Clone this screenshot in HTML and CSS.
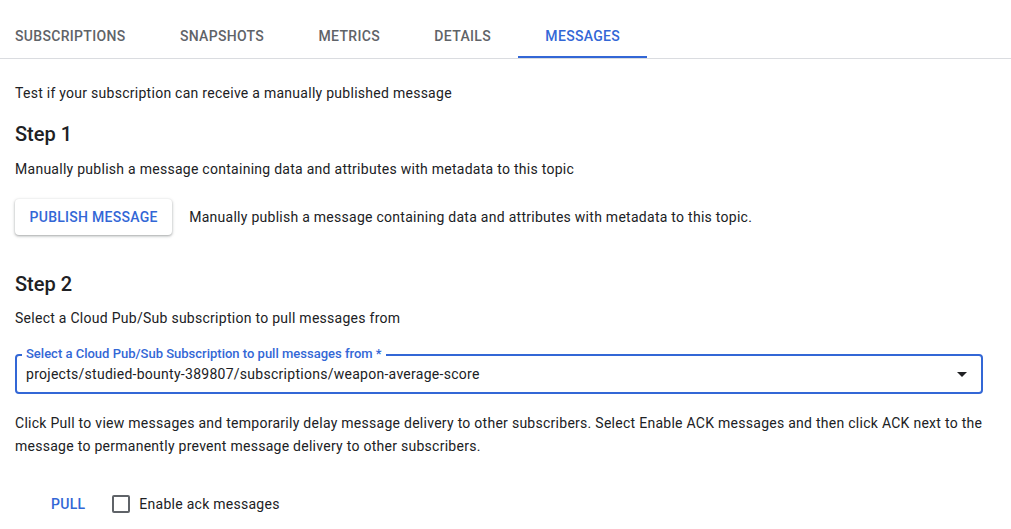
FILE: index.html
```html
<!DOCTYPE html>
<html>
<head>
<meta charset="utf-8">
<link rel="stylesheet" href="styles.css">
</head>
<body>
<nav class="tabs">
  <div class="tab first">SUBSCRIPTIONS</div>
  <div class="tab">SNAPSHOTS</div>
  <div class="tab">METRICS</div>
  <div class="tab">DETAILS</div>
  <div class="tab active">MESSAGES</div>
</nav>
<main class="content">
  <p class="intro">Test if your subscription can receive a manually published message</p>
  <h2 class="step step1">Step 1</h2>
  <p class="desc">Manually publish a message containing data and attributes with metadata to this topic</p>
  <div class="publish-row">
    <button class="raised-btn">PUBLISH MESSAGE</button>
    <span class="publish-text">Manually publish a message containing data and attributes with metadata to this topic.</span>
  </div>
  <h2 class="step step2">Step 2</h2>
  <p class="desc">Select a Cloud Pub/Sub subscription to pull messages from</p>
  <div class="field">
    <span class="field-label">Select a Cloud Pub/Sub Subscription to pull messages from *</span>
    <span class="field-value">projects/studied-bounty-389807/subscriptions/weapon-average-score</span>
    <svg class="arrow" width="24" height="24" viewBox="0 0 24 24"><path d="M7 10l5 5 5-5z" fill="#202124"/></svg>
  </div>
  <p class="help">Click Pull to view messages and temporarily delay message delivery to other subscribers. Select Enable ACK messages and then click ACK next to the message to permanently prevent message delivery to other subscribers.</p>
  <div class="pull-row">
    <button class="text-btn">PULL</button>
    <label class="check"><span class="box"></span><span class="check-label">Enable ack messages</span></label>
  </div>
</main>
</body>
</html>
```
FILE: styles.css
```css
* { box-sizing: border-box; }
html, body { margin: 0; padding: 0; background: #fff; }
body {
  font-family: Roboto, "Liberation Sans", Arial, sans-serif;
  font-size: 14px;
  letter-spacing: 0.27px;
  color: #202124;
  line-height: 20px;
  width: 1011px;
  height: 529px;
  overflow: hidden;
}
.tabs {
  display: flex;
  padding-top: 14px;
  border-bottom: 1px solid #dadce0;
}
.tab {
  height: 44px;
  line-height: 44px;
  padding: 0 27.2px;
  font-weight: 500;
  font-size: 14px;
  letter-spacing: 0.32px;
  color: #5f6368;
  border-bottom: 2px solid transparent;
}
.tab.first { padding-left: 15px; }
.tab.active { color: #3367d6; border-bottom-color: #3367d6; }
.content { padding: 0 28px 0 15px; }
p { margin: 0; }
.intro { margin-top: 24px; }
.step {
  margin: 0;
  font-size: 20px;
  font-weight: 500;
  line-height: 28px;
  letter-spacing: 0;
  color: #202124;
}
.step1 { margin-top: 17px; }
.step2 { margin-top: 35px; }
.desc { margin-top: 11px; }
.step2 + .desc { margin-top: 10px; }
.publish-row {
  display: flex;
  align-items: center;
  margin-top: 20px;
}
.raised-btn {
  height: 36px;
  padding: 0 14.5px;
  border: none;
  border-radius: 4px;
  background: #fff;
  color: #3367d6;
  font-family: inherit;
  font-size: 14px;
  font-weight: 500;
  letter-spacing: 0.27px;
  box-shadow: 0 1px 2px rgba(60,64,67,.3), 0 1px 3px 1px rgba(60,64,67,.15);
}
.publish-text { margin-left: 17px; }
.field {
  position: relative;
  margin-top: 26px;
  height: 40px;
  border: 2px solid #3367d6;
  border-radius: 4px;
  display: flex;
  align-items: center;
  padding: 0 7px 0 9px;
}
.field-label {
  position: absolute;
  left: 5px;
  top: -10px;
  padding: 0 4px;
  background: #fff;
  font-size: 13px;
  font-weight: 500;
  letter-spacing: 0;
  line-height: 16px;
  color: #3367d6;
}
.field-value { flex: 1; }
.arrow { display: block; }
.help { margin-top: 18px; line-height: 23px; }
.pull-row {
  display: flex;
  align-items: center;
  margin-top: 28px;
  height: 36px;
}
.text-btn {
  margin-left: 28px;
  padding: 0 8px;
  height: 36px;
  border: none;
  background: none;
  color: #3367d6;
  font-family: inherit;
  font-size: 14px;
  font-weight: 500;
  letter-spacing: 0.27px;
}
.check { display: flex; align-items: center; margin-left: 19px; }
.box {
  width: 18px;
  height: 18px;
  border: 2px solid #5f6368;
  border-radius: 2px;
}
.check-label { margin-left: 9px; }
```
